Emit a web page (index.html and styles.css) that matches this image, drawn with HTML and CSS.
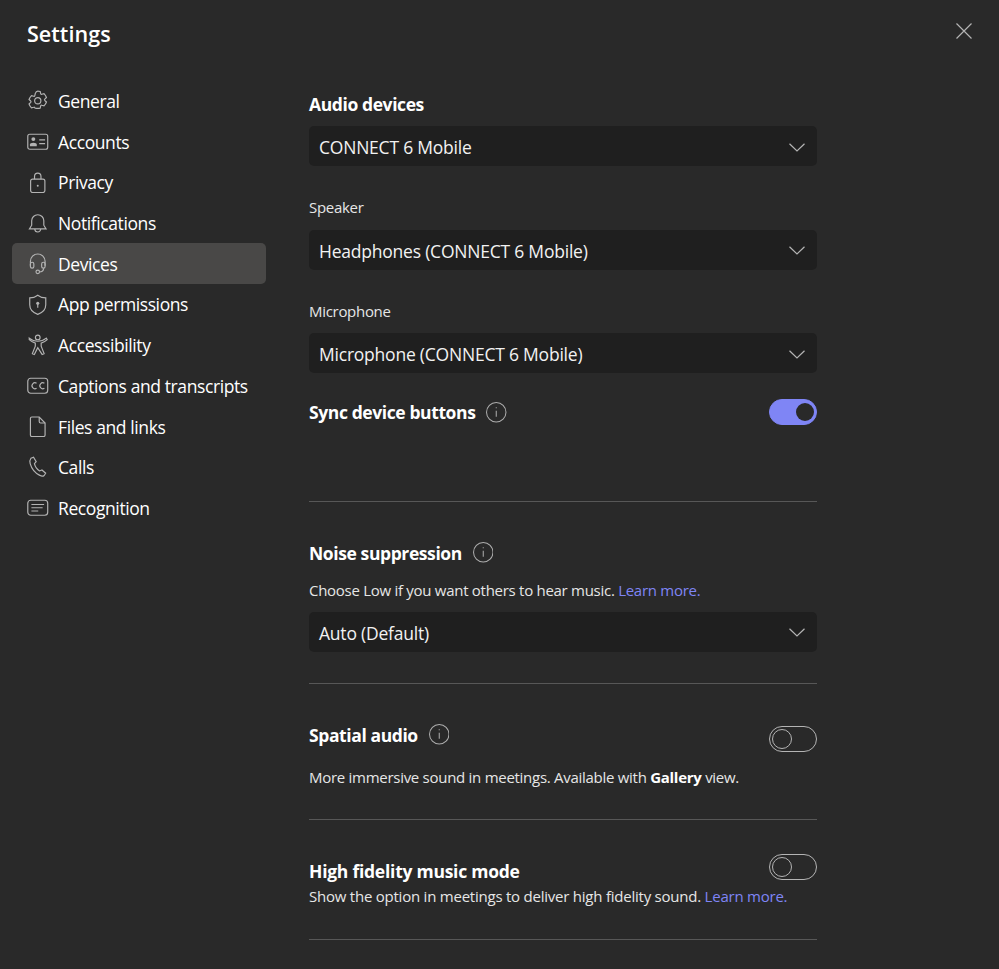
FILE: index.html
```html
<!DOCTYPE html>
<html lang="en">
<head>
<meta charset="utf-8">
<title>Settings</title>
<link rel="stylesheet" href="styles.css">
</head>
<body>
<div class="dialog">
  <header class="header">
    <h1 class="title">Settings</h1>
    <button class="close" aria-label="Close"><svg width="16" height="16" viewBox="0 0 16 16"><path d="M.5.5l15 15M15.500.5l-15 15"/></svg></button>
  </header>
  <div class="body">
    <nav class="nav">
      <a class="nav-item"><svg class="ico" viewBox="0 0 22 22"><path d="M11 .8c.9 0 1.700.1 2.500.3l.5 2.300c.1.500.6.800 1.100.6l2.300-.7c1.100 1.100 2 2.500 2.500 4l-1.700 1.600c-.4.400-.4 1 0 1.400l1.700 1.600c-.5 1.500-1.400 2.900-2.500 4l-2.300-.7c-.5-.2-1 .1-1.100.6l-.5 2.300c-.8.200-1.600.3-2.500.3s-1.700-.1-2.500-.3L8 17.800c-.1-.5-.6-.8-1.100-.6l-2.300.7c-1.100-1.100-2-2.500-2.500-4l1.700-1.600c.4-.4.4-1 0-1.400L2.100 9.300c.5-1.500 1.400-2.900 2.500-4l2.300.7c.5.2 1-.1 1.100-.6l.5-2.300C9.300.9 10.100.8 11 .8z" transform="translate(0 .4)"/><circle cx="11" cy="11" r="3.200"/></svg><span>General</span></a>
      <a class="nav-item"><svg class="ico" viewBox="0 0 22 22"><rect x=".8" y="3.300" width="20.400" height="15.400" rx="2"/><circle cx="6.500" cy="8.300" r="2" class="fill"/><path class="fill" d="M3 15.700v-2c0-1 1.300-1.800 3.500-1.800s3.500.8 3.500 1.800v2z"/><path d="M12.500 9h6M12.500 13h6"/></svg><span>Accounts</span></a>
      <a class="nav-item"><svg class="ico" viewBox="0 0 22 22"><rect x="3.700" y="7.300" width="14.600" height="13.700" rx="2"/><path d="M7.700 7.300V4.500a3.300 3.300 0 0 1 6.600 0v2.800"/><circle cx="11" cy="14" r="1" class="fill"/></svg><span>Privacy</span></a>
      <a class="nav-item"><svg class="ico" viewBox="0 0 22 22"><path d="M4.800 9a6.200 6.200 0 0 1 12.400 0v4.500l2.300 3.800H2.500l2.300-3.800z"/><path d="M8 17.500a3 3 0 0 0 6 0"/></svg><span>Notifications</span></a>
      <a class="nav-item active"><svg class="ico" viewBox="0 0 22 22"><path d="M3.500 13V8.500a7.500 7.500 0 0 1 15 0V13"/><rect x="3.500" y="9.500" width="3.500" height="6" rx="1.700"/><rect x="15" y="9.500" width="3.500" height="6" rx="1.700"/><path d="M17 15.500c0 2.500-2 3.800-4.500 3.800"/><circle cx="11" cy="19.300" r="1.800"/></svg><span>Devices</span></a>
      <a class="nav-item"><svg class="ico" viewBox="0 0 22 22"><path d="M11 1.200c2.200 1.800 4.800 2.700 8.200 2.800V11c0 4.700-3 8-8.200 9.800C5.800 19 2.800 15.700 2.800 11V4c3.400-.1 6-1 8.200-2.800z"/><circle cx="11" cy="9.500" r="1.600" class="fill"/><path d="M11 10v4"/></svg><span>App permissions</span></a>
      <a class="nav-item"><svg class="ico" viewBox="0 0 22 22"><circle cx="11" cy="3.500" r="2.400"/><path d="M2.300 4.200c2.400 2 5 3.200 8.700 3.200s6.300-1.200 8.700-3.200l1 1.600c-1.800 1.700-3.800 2.900-6.200 3.500v3.200l3 7.600-2 .8L11 14l-3.500 6.900-2-.8 3-7.600V9.300C6.100 8.700 4.100 7.500 2.300 5.800z"/></svg><span>Accessibility</span></a>
      <a class="nav-item"><svg class="ico" viewBox="0 0 22 22"><rect x=".8" y="3.300" width="20.400" height="15.400" rx="3"/><path d="M9.800 8.500a3 3 0 1 0 0 5M17.800 8.500a3 3 0 1 0 0 5"/></svg><span>Captions and transcripts</span></a>
      <a class="nav-item"><svg class="ico" viewBox="0 0 22 22"><path d="M5 1h7.500l6 6.200V19.500a1.500 1.500 0 0 1-1.500 1.500H5a1.500 1.500 0 0 1-1.500-1.500v-17A1.500 1.500 0 0 1 5 1z"/><path d="M12.500 1v4.700a1.500 1.500 0 0 0 1.500 1.500h4.500"/></svg><span>Files and links</span></a>
      <a class="nav-item"><svg class="ico" viewBox="0 0 22 22"><path d="M4 2.300L6.700 1.200l2.700 4.600-1.800 2c.7 3 2.700 5.800 5.300 7.500l2.400-1 3.800 3.300-1.500 2.300c-1.300 1.100-3 .8-4.500-.1C7.800 17.200 4.700 12.700 3.300 8 2.800 6 3 3.600 4 2.300z"/></svg><span>Calls</span></a>
      <a class="nav-item"><svg class="ico" viewBox="0 0 22 22"><rect x=".8" y="3.300" width="20.400" height="15.400" rx="3"/><path d="M4.500 7.700h13M4.500 11h11.500M4.500 14.300h7"/></svg><span>Recognition</span></a>
    </nav>
    <main class="main">
      <section class="section devices">
        <h2 class="heading">Audio devices</h2>
        <div class="select"><span>CONNECT 6 Mobile</span><svg class="chev" viewBox="0 0 16 9"><path d="M.5.800L8 8 15.500.800"/></svg></div>
        <label class="label">Speaker</label>
        <div class="select"><span>Headphones (CONNECT 6 Mobile)</span><svg class="chev" viewBox="0 0 16 9"><path d="M.5.800L8 8 15.500.800"/></svg></div>
        <label class="label">Microphone</label>
        <div class="select"><span>Microphone (CONNECT 6 Mobile)</span><svg class="chev" viewBox="0 0 16 9"><path d="M.5.800L8 8 15.500.800"/></svg></div>
        <div class="row sync">
          <h2 class="heading">Sync device buttons<svg class="info" viewBox="0 0 20 20"><circle cx="10" cy="10" r="9.500"/><path d="M10 8.500v6M10 5v1.200"/></svg></h2>
          <span class="toggle on"></span>
        </div>
      </section>
      <section class="section noise">
        <h2 class="heading">Noise suppression<svg class="info" viewBox="0 0 20 20"><circle cx="10" cy="10" r="9.500"/><path d="M10 8.500v6M10 5v1.200"/></svg></h2>
        <p class="text">Choose Low if you want others to hear music. <a class="link">Learn more.</a></p>
        <div class="select"><span>Auto (Default)</span><svg class="chev" viewBox="0 0 16 9"><path d="M.5.800L8 8 15.500.800"/></svg></div>
      </section>
      <section class="section spatial">
        <div class="row">
          <h2 class="heading">Spatial audio<svg class="info" viewBox="0 0 20 20"><circle cx="10" cy="10" r="9.500"/><path d="M10 8.500v6M10 5v1.200"/></svg></h2>
          <span class="toggle"></span>
        </div>
        <p class="text">More immersive sound in meetings. Available with <b>Gallery</b> view.</p>
      </section>
      <section class="section hifi">
        <div class="row">
          <h2 class="heading">High fidelity music mode</h2>
          <span class="toggle"></span>
        </div>
        <p class="text">Show the option in meetings to deliver high fidelity sound. <a class="link">Learn more.</a></p>
      </section>
    </main>
  </div>
</div>
</body>
</html>
```
FILE: styles.css
```css
* { box-sizing: border-box; }
html, body { margin: 0; height: 100%; }
body { background: #292929; color: #fff; font-family: "Open Sans", "Noto Sans", sans-serif; overflow: hidden; }
.dialog { height: 969px; display: flex; flex-direction: column; }
.header { height: 80.700px; flex: none; display: flex; justify-content: space-between; align-items: flex-start; padding: 20px 27px 0 27px; }
.title { margin: 0; font-size: 21.500px; line-height: 28px; font-weight: 600; letter-spacing: .05px; }
.close { background: none; border: 0; padding: 0; margin: 3px 0 0; width: 16px; height: 16px; display: block; }
.close svg { display: block; }
.close path { stroke: #b4b4b4; stroke-width: 1.200; fill: none; }
.body { display: flex; padding-left: 12px; }
.nav { width: 254px; flex: none; display: flex; flex-direction: column; }
.nav-item { height: 40.700px; display: flex; align-items: center; gap: 9.500px; padding-left: 15px; border-radius: 5px; font-size: 17.500px; letter-spacing: -.4px; color: #fff; }
.nav-item.active { background: #494847; }
.ico { width: 21.500px; height: 21.500px; flex: none; fill: none; stroke: #b3b3b3; stroke-width: 1.200; }
.ico .fill { fill: #b3b3b3; stroke: none; }
.main { width: 508px; margin-left: 43px; flex: none; }
.section { border-bottom: 1px solid #575757; }
.devices { height: 421px; padding-top: 11.700px; }
.noise { height: 182px; padding-top: 39px; }
.spatial { height: 136px; padding-top: 39px; }
.hifi { height: 120px; padding-top: 34px; }
.heading { margin: 0; font-size: 17.500px; line-height: 24px; font-weight: 700; letter-spacing: -.4px; display: flex; align-items: center; }
.select { height: 40px; margin-top: 10px; background: #1f1f1f; border-radius: 5px; display: flex; align-items: center; justify-content: space-between; padding: 2px 12px 0 10px; font-size: 17.500px; letter-spacing: -.22px; color: #f2f2f2; }
.chev { width: 16px; height: 9px; fill: none; stroke: #b4b4b4; stroke-width: 1.200; }
.label { display: block; margin-top: 30px; font-size: 15px; line-height: 22px; letter-spacing: -.3px; color: #e6e6e6; }
.label + .select { margin-top: 11.500px; }
.row { display: flex; justify-content: space-between; align-items: flex-start; }
.sync { margin-top: 26px; }
.sync .heading { margin-top: 1px; }
.toggle { width: 48px; height: 26px; border-radius: 13px; border: 1px solid #b4b4b4; display: flex; align-items: center; padding: 0 2px; flex: none; }
.toggle::before { content: ""; width: 18px; height: 18px; border-radius: 50%; border: 1px solid #b4b4b4; }
.toggle.on { background: #7f85f5; border-color: #7f85f5; justify-content: flex-end; }
.toggle.on::before { background: #292929; border: 0; }
.info { width: 20.500px; height: 20.500px; margin-left: 11px; fill: none; stroke: #adadad; stroke-width: 1; flex: none; }
.text { margin: 14px 0 0; font-size: 15px; line-height: 22px; letter-spacing: -.28px; color: #e6e6e6; }
.text b { color: #fff; }
.link { color: #7f85f5; }
.noise .select { margin-top: 11px; }
.spatial .toggle { margin-top: 3px; }
.hifi .heading { margin-top: 5px; letter-spacing: -.25px; }
.hifi .text { margin-top: 2px; letter-spacing: -.23px; }
```
